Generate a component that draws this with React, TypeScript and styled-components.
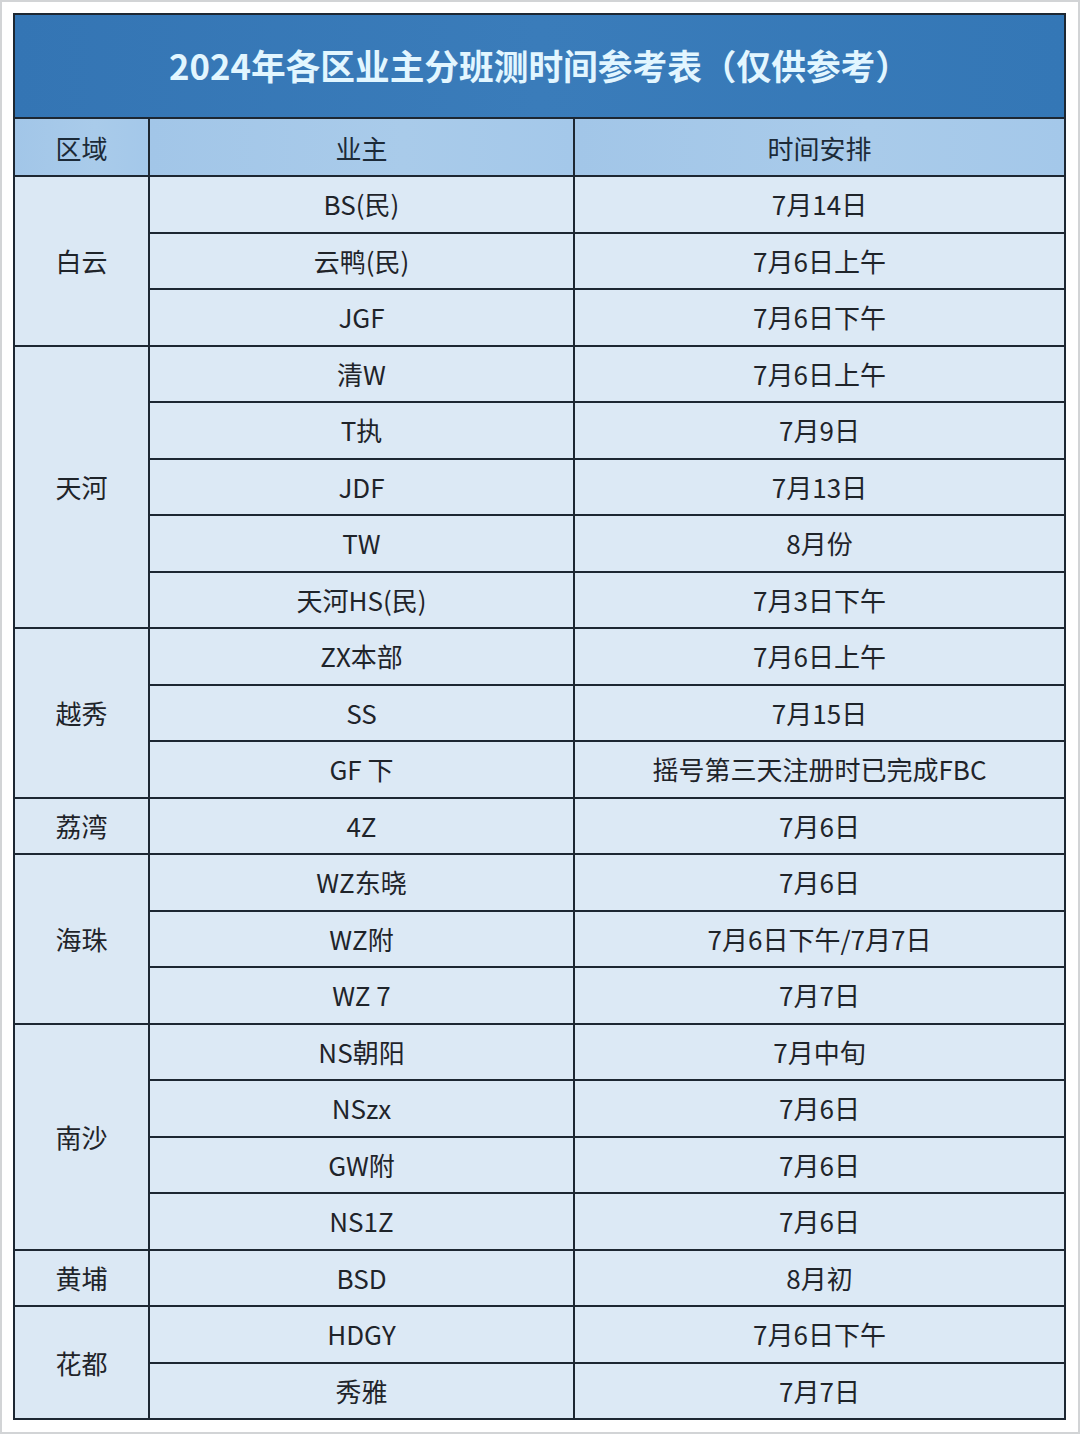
import styled, { createGlobalStyle } from "styled-components";

const GlobalStyle = createGlobalStyle`
  html, body {
    margin: 0;
    padding: 0;
    background: #ffffff;
  }
  body {
    font-family: "Noto Sans CJK SC", "Noto Sans", sans-serif;
  }
`;

const Frame = styled.div`
  box-sizing: border-box;
  width: 1080px;
  height: 1434px;
  padding: 11px 0 0 11px;
  border: 2px solid #d2d4d6;
  background: #ffffff;
`;

const Table = styled.table`
  width: 1053px;
  table-layout: fixed;
  border-collapse: separate;
  border-spacing: 0;
  border-top: 2px solid #1d2732;
  border-left: 2px solid #1d2732;
  color: #1f242a;
`;

const TitleRow = styled.tr`
  height: 104px;
`;

const TitleCell = styled.th`
  padding: 0 0 2px 0;
  background: linear-gradient(90deg, #3475b4 0%, #3a7cba 50%, #3477b6 100%);
  border-right: 2px solid #1d2732;
  border-bottom: 2px solid #1d2732;
  color: #e2f6ff;
  font-size: 34.7px;
  font-weight: 700;
  text-align: center;
`;

const HeadRow = styled.tr`
  height: 58px;
`;

const HeadCell = styled.th`
  padding: 0;
  background: linear-gradient(90deg, #a2c6e8 0%, #a9cbea 60%, #a4c8ea 100%);
  border-right: 2px solid #1d2732;
  border-bottom: 2px solid #1d2732;
  color: #1c2a38;
  font-size: 26px;
  font-weight: 400;
  text-align: center;
`;

const Row = styled.tr`
  height: 56.5px;
`;

const Cell = styled.td`
  padding: 0;
  background: #dce9f5;
  border-right: 2px solid #1d2732;
  border-bottom: 2px solid #1d2732;
  font-size: 26px;
  text-align: center;
  white-space: nowrap;
  line-height: 1;
`;

const AreaCell = styled(Cell)`
  background: #dbe8f4;
`;

type Entry = { owner: string; time: string };
type Area = { name: string; items: Entry[] };

const areas: Area[] = [
  {
    name: "白云",
    items: [
      { owner: "BS(民)", time: "7月14日" },
      { owner: "云鸭(民)", time: "7月6日上午" },
      { owner: "JGF", time: "7月6日下午" },
    ],
  },
  {
    name: "天河",
    items: [
      { owner: "清W", time: "7月6日上午" },
      { owner: "T执", time: "7月9日" },
      { owner: "JDF", time: "7月13日" },
      { owner: "TW", time: "8月份" },
      { owner: "天河HS(民)", time: "7月3日下午" },
    ],
  },
  {
    name: "越秀",
    items: [
      { owner: "ZX本部", time: "7月6日上午" },
      { owner: "SS", time: "7月15日" },
      { owner: "GF 下", time: "摇号第三天注册时已完成FBC" },
    ],
  },
  { name: "荔湾", items: [{ owner: "4Z", time: "7月6日" }] },
  {
    name: "海珠",
    items: [
      { owner: "WZ东晓", time: "7月6日" },
      { owner: "WZ附", time: "7月6日下午/7月7日" },
      { owner: "WZ 7", time: "7月7日" },
    ],
  },
  {
    name: "南沙",
    items: [
      { owner: "NS朝阳", time: "7月中旬" },
      { owner: "NSzx", time: "7月6日" },
      { owner: "GW附", time: "7月6日" },
      { owner: "NS1Z", time: "7月6日" },
    ],
  },
  { name: "黄埔", items: [{ owner: "BSD", time: "8月初" }] },
  {
    name: "花都",
    items: [
      { owner: "HDGY", time: "7月6日下午" },
      { owner: "秀雅", time: "7月7日" },
    ],
  },
];

export default function App() {
  return (
    <>
      <GlobalStyle />
      <Frame>
        <Table>
          <colgroup>
            <col style={{ width: 135 }} />
            <col style={{ width: 425 }} />
            <col style={{ width: 491 }} />
          </colgroup>
          <thead>
            <TitleRow>
              <TitleCell colSpan={3}>2024年各区业主分班测时间参考表（仅供参考）</TitleCell>
            </TitleRow>
            <HeadRow>
              <HeadCell>区域</HeadCell>
              <HeadCell>业主</HeadCell>
              <HeadCell>时间安排</HeadCell>
            </HeadRow>
          </thead>
          <tbody>
            {areas.map((area) =>
              area.items.map((item, i) => (
                <Row key={area.name + i}>
                  {i === 0 && (
                    <AreaCell rowSpan={area.items.length}>{area.name}</AreaCell>
                  )}
                  <Cell>{item.owner}</Cell>
                  <Cell>{item.time}</Cell>
                </Row>
              ))
            )}
          </tbody>
        </Table>
      </Frame>
    </>
  );
}
